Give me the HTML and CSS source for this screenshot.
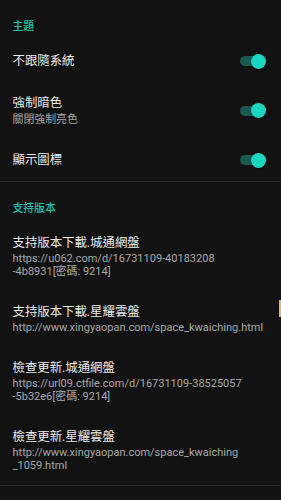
FILE: index.html
```html
<!DOCTYPE html>
<html lang="zh-Hant">
<head>
<meta charset="utf-8">
<title>設定</title>
<link rel="stylesheet" href="styles.css">
</head>
<body>
<div class="screen">
  <section class="group">
    <div class="cat">主題</div>
    <div class="row single">
      <div class="text"><div class="title">不跟隨系統</div></div>
      <div class="switch"><span class="track"></span><span class="thumb"></span></div>
    </div>
    <div class="row double">
      <div class="text">
        <div class="title">強制暗色</div>
        <div class="summary">關閉強制亮色</div>
      </div>
      <div class="switch"><span class="track"></span><span class="thumb"></span></div>
    </div>
    <div class="row single">
      <div class="text"><div class="title">顯示圖標</div></div>
      <div class="switch"><span class="track"></span><span class="thumb"></span></div>
    </div>
  </section>
  <section class="group second">
    <div class="cat">支持版本</div>
    <div class="row link">
      <div class="text">
        <div class="title">支持版本下載.城通網盤</div>
        <div class="summary url">https://u062.com/d/16731109-40183208<br>-4b8931[密碼: 9214]</div>
      </div>
    </div>
    <div class="row link">
      <div class="text">
        <div class="title">支持版本下載.星耀雲盤</div>
        <div class="summary url">http://www.xingyaopan.com/space_kwaiching.html</div>
      </div>
    </div>
    <div class="row link">
      <div class="text">
        <div class="title">檢查更新.城通網盤</div>
        <div class="summary url">https://url09.ctfile.com/d/16731109-38525057<br>-5b32e6[密碼: 9214]</div>
      </div>
    </div>
    <div class="row link">
      <div class="text">
        <div class="title">檢查更新.星耀雲盤</div>
        <div class="summary url">http://www.xingyaopan.com/space_kwaiching<br>_1059.html</div>
      </div>
    </div>
  </section>
  <div class="scrollbar"></div>
</div>
</body>
</html>
```
FILE: styles.css
```css
html, body {
  margin: 0;
  padding: 0;
  background: #121212;
}
.screen {
  position: relative;
  width: 281px;
  height: 500px;
  overflow: hidden;
  background: #121212;
  font-family: Roboto, "Noto Sans CJK TC", "Noto Sans", sans-serif;
  color: #e8e8e8;
}
.group {
  border-bottom: 1px solid #2b2b2b;
}
.cat {
  padding: 20px 12.5px 7px;
  font-size: 10.8px;
  line-height: 13px;
  color: #1fc3ac;
  font-weight: 500;
}
.row {
  display: flex;
  align-items: center;
  padding: 13px 15px 13px 12.5px;
}
.link {
  padding-top: 12.75px;
  padding-bottom: 12.75px;
}
.text {
  flex: 1;
  min-width: 0;
}
.title {
  font-size: 12.4px;
  line-height: 16px;
  color: #ebebeb;
  white-space: nowrap;
}
.summary {
  margin-top: 2px;
  font-size: 10.9px;
  line-height: 13px;
  color: #a9a9a9;
  white-space: nowrap;
}
.url {
  font-size: 11px;
  line-height: 12.75px;
}
.switch {
  position: relative;
  width: 26px;
  height: 15px;
  flex: none;
}
.track {
  position: absolute;
  left: 0;
  right: 0;
  top: 2.5px;
  height: 10px;
  border-radius: 5px;
  background: #1b5a51;
}
.thumb {
  position: absolute;
  right: 0;
  top: 0;
  width: 15px;
  height: 15px;
  border-radius: 50%;
  background: #1cd6bf;
  box-shadow: 0 0.5px 1.5px rgba(0, 0, 0, 0.5);
}
.scrollbar {
  position: absolute;
  right: 0;
  top: 300px;
  width: 2.5px;
  height: 17px;
  background: #d6bb7c;
}
```
